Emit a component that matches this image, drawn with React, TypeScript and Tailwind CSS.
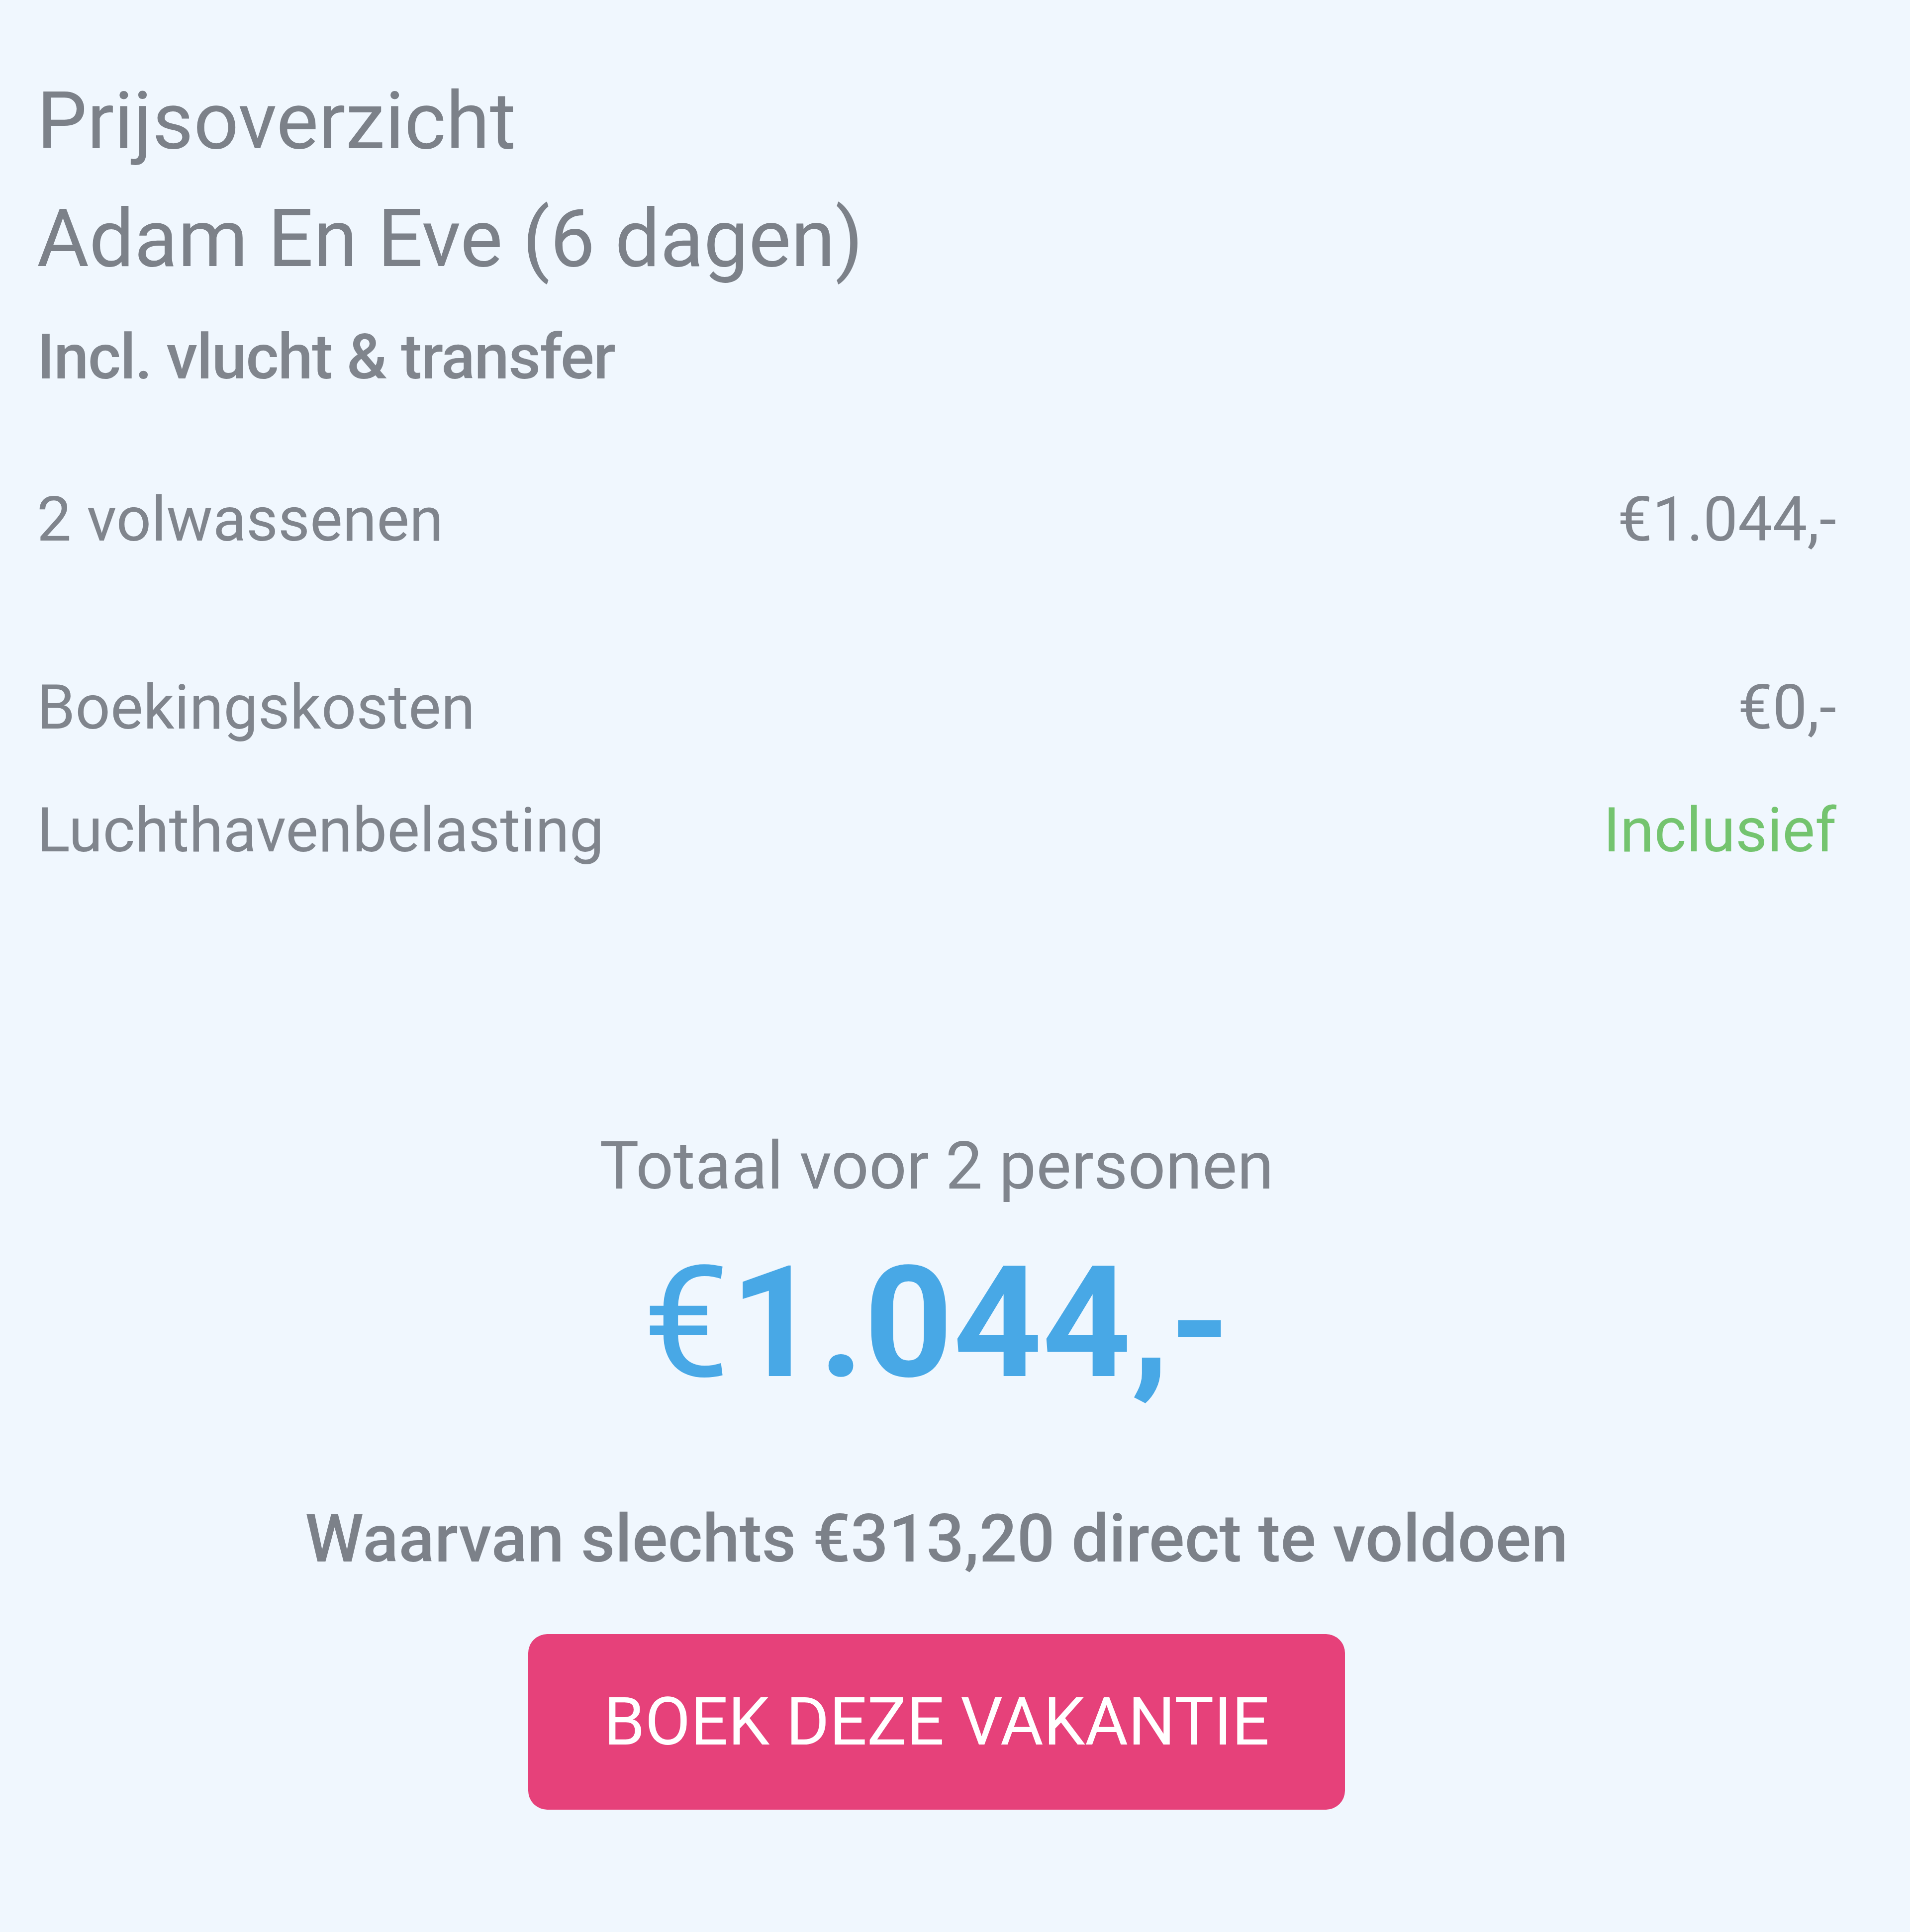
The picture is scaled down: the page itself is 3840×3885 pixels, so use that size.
import React from "react";

export default function App() {
  return (
    <div
      className="min-h-[3885px] w-[3840px] bg-[#f0f7fe] pl-[74px] pr-[148px] pt-[148px] pb-[245px] text-[#80858d]"
      style={{ fontFamily: "Roboto, 'Liberation Sans', sans-serif" }}
    >
      <h1 className="text-[160px] leading-[192px] font-normal text-[#7c8189]">Prijsoverzicht</h1>
      <h2 className="mt-[44px] text-[161px] leading-[192px] font-normal text-[#7c8189]">Adam En Eve (6 dagen)</h2>
      <p className="mt-[66px] text-[127px] leading-[152px] font-medium tracking-[-2px] text-[#80858d]">Incl. vlucht &amp; transfer</p>

      <div className="mt-[160px] flex items-center justify-between text-[124px] leading-[182px]">
        <span>2 volwassenen</span>
        <span>€1.044,-</span>
      </div>
      <div className="mt-[196px] flex items-center justify-between text-[124px] leading-[182px]">
        <span>Boekingskosten</span>
        <span>€0,-</span>
      </div>
      <div className="mt-[65px] flex items-center justify-between text-[124px] leading-[182px]">
        <span>Luchthavenbelasting</span>
        <span className="text-[#74c46f]">Inclusief</span>
      </div>

      <div className="mt-[484px] flex flex-col items-center">
        <p className="text-[133px] leading-[200px]">Totaal voor 2 personen</p>
        <p className="mt-[60px] text-[312px] leading-[312px] font-bold text-[#48a8e6]">
          <span className="font-normal">€</span>1.044,-
        </p>
        <p className="mt-[178px] text-[134px] leading-[200px] font-medium text-[#7c8189]">
          Waarvan slechts €313,20 direct te voldoen
        </p>
        <button className="mt-[91px] flex h-[353px] w-[1642px] items-center justify-center rounded-[38px] bg-[#e6417a] text-[133px] leading-[150px] text-white">
          BOEK DEZE VAKANTIE
        </button>
      </div>
    </div>
  );
}
